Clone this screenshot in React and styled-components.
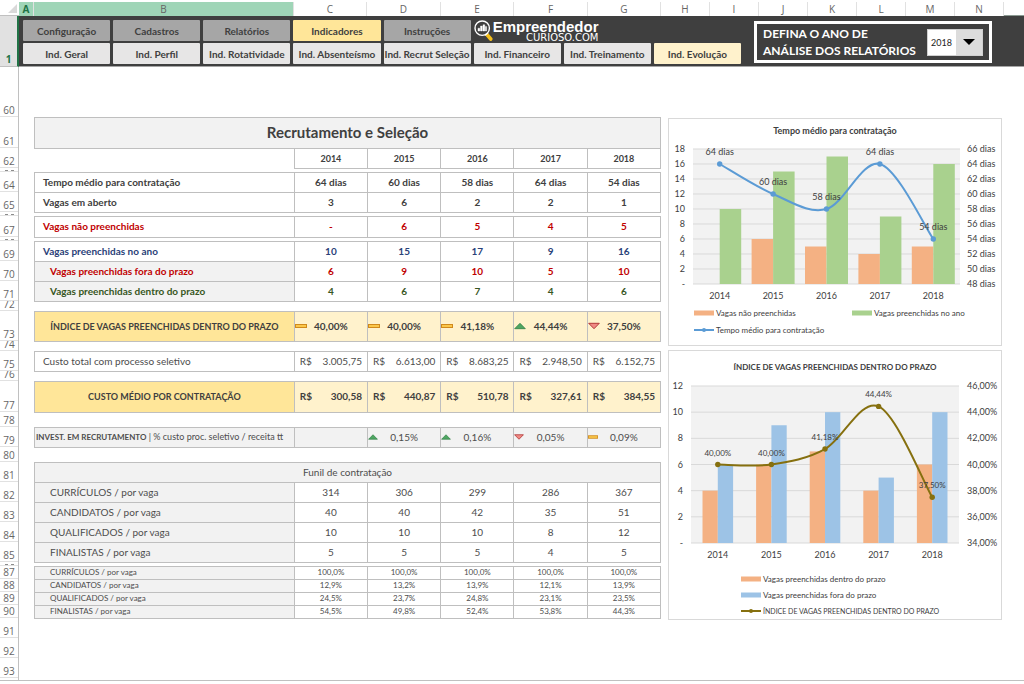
import React, { useState } from 'react';
import styled, { createGlobalStyle } from 'styled-components';

const GlobalStyle = createGlobalStyle`
    * {
        box-sizing: border-box;
    }

    body {
        margin: 0;
        background: #fff;
        color: #404040;
        font-family: Lato, 'Open Sans', sans-serif;
        font-size: 10px;
    }
`;

const SHEET_COLUMNS = '15fr 260fr 73fr 74fr 73fr 74fr 73fr repeat(7, 49fr) 20fr';

const Workbook = styled.div`
    border-bottom: 1px solid #c0c0c0;
`;

const SheetRow = styled.div`
    display: grid;
    grid-template-columns: 19px 1fr;
`;

const ColumnHeads = styled.div`
    display: grid;
    grid-template-columns: ${SHEET_COLUMNS};
    height: 16px;
    padding-top: 2px;
    border-bottom: 1px solid #8c9a92;
`;

const ColumnHead = styled.div`
    border-right: 1px solid #e1e1e1;
    background: ${({ $selected }) => ($selected ? '#9fd5b7' : '#fff')};
    color: ${({ $strong }) => ($strong ? '#217346' : '#666')};
    font-family: 'Open Sans', sans-serif;
    font-size: 10px;
    font-weight: ${({ $strong }) => ($strong ? 700 : 400)};
    line-height: 14px;
    text-align: center;
`;

const Corner = styled.div`
    display: flex;
    align-items: flex-end;
    justify-content: flex-end;
    padding: 2px;
    border-bottom: 1px solid #c0c0c0;
`;

const FrozenNumber = styled.div`
    display: flex;
    align-items: flex-end;
    justify-content: center;
    border-right: 2px solid #217346;
    border-bottom: 1px solid #c0c0c0;
    background: #e1e1e1;
    color: #217346;
    font-family: 'Open Sans', sans-serif;
    font-size: 10px;
    font-weight: 700;
`;

const Toolbar = styled.header`
    display: grid;
    grid-template-columns: 718fr 238fr;
    gap: 13px;
    height: 51px;
    padding: 4px 32px 3px 4px;
    border-bottom: 1px solid #a6a6a6;
    background: #3f3f3f;
`;

const Nav = styled.nav`
    display: grid;
    grid-template-columns: repeat(8, minmax(0, 1fr));
    grid-template-rows: 21px 21px;
    gap: 2px 3px;
`;

const tabColors = {
    main: '#a6a6a6',
    mainActive: '#ffe699',
    sub: '#e7e6e6',
    subActive: '#fff2cc',
};

const Tab = styled.button`
    min-width: 0;
    padding: 0;
    border: 0;
    border-radius: 1px;
    background: ${({ $kind }) => tabColors[$kind]};
    color: #404040;
    font-family: inherit;
    font-size: 10px;
    font-weight: 700;
    white-space: nowrap;
    cursor: pointer;
`;

const Brand = styled.div`
    display: flex;
    grid-column: span 3;
    color: #fff;
`;

const BrandName = styled.div`
    display: flex;
    flex-direction: column;
    align-items: flex-end;
    font-family: 'Liberation Sans', sans-serif;
    font-size: 15px;
    font-weight: 700;
    line-height: 14px;

    small {
        font-family: 'DejaVu Sans', sans-serif;
        font-size: 10px;
        font-weight: 400;
        line-height: 7px;
    }
`;

const YearBox = styled.div`
    display: flex;
    align-items: center;
    justify-content: space-between;
    height: 42px;
    margin-top: 1px;
    padding: 0 6px;
    border: 3px solid #fff;
    color: #fff;
    font-size: 12px;
    font-weight: 700;
    line-height: 17px;
    white-space: nowrap;
`;

const SelectWrap = styled.div`
    position: relative;
    width: 56px;
    height: 27px;
`;

const YearSelect = styled.select`
    width: 100%;
    height: 100%;
    padding: 0 3px;
    border: 1px solid #d0d0d0;
    border-radius: 0;
    appearance: none;
    background: #fff;
    color: #222;
    font-family: inherit;
    font-size: 9px;
`;

const SelectArrow = styled.span`
    position: absolute;
    top: 1px;
    right: 1px;
    bottom: 1px;
    display: flex;
    align-items: center;
    justify-content: center;
    width: 26px;
    background: #dcdcdc;
    pointer-events: none;
`;

const Gutter = styled.div`
    padding-bottom: 2px;
    border-right: 1px solid #c0c0c0;
`;

const RowNumber = styled.div`
    display: flex;
    align-items: flex-end;
    justify-content: center;
    height: ${({ $height }) => $height}px;
    overflow: hidden;
    border-bottom: 1px solid #e1e1e1;
    color: #666;
    font-family: 'Open Sans', sans-serif;
    font-size: 10px;
    line-height: 12px;
`;

// What is left of a number in a row that is almost collapsed
const CollapsedMark = styled.span`
    width: 9px;
    border-bottom: 1px dashed #8c8c8c;
`;

const Sheet = styled.main`
    display: grid;
    grid-template-columns: 627fr 334fr;
    align-items: start;
    gap: 7px;
    padding: 50px 22px 0 15px;
`;

const DataTable = styled.table`
    width: 100%;
    border-collapse: collapse;
    table-layout: fixed;
`;

const LabelCol = styled.col`
    width: 41.5%;
`;

const Title = styled.th`
    padding: 0 0 2px;
    border: 1px solid #bfbfbf;
    background: #f2f2f2;
    font-size: 15px;
    line-height: 20px;
`;

const Row = styled.tr`
    height: ${({ $height }) => $height}px;
`;

const Label = styled.th`
    padding: 0 0 1px ${({ $indent }) => $indent || 0}px;
    border: 1px solid #bfbfbf;
    background: ${({ $bg }) => $bg || '#fff'};
    color: ${({ $color, $bold }) => $color || ($bold ? '#404040' : '#4d4d4d')};
    font-size: ${({ $size }) => $size || 10}px;
    font-weight: ${({ $bold }) => ($bold ? 700 : 400)};
    line-height: 11px;
    text-align: ${({ $center }) => ($center ? 'center' : 'left')};
    white-space: nowrap;

    b {
        font-size: 8px;
    }
`;

const Cell = styled.td`
    padding: 0 0 1px;
    border: 1px solid #bfbfbf;
    background: ${({ $bg }) => $bg || '#fff'};
    color: ${({ $color, $bold }) => $color || ($bold ? '#404040' : '#4d4d4d')};
    font-size: ${({ $size }) => $size || 10}px;
    font-weight: ${({ $bold }) => ($bold ? 700 : 400)};
    line-height: 11px;
    text-align: center;
`;

const YearHead = styled(Cell).attrs({ as: 'th', scope: 'col' })``;

const Blank = styled.td`
    padding: 0;
`;

const Money = styled.div`
    display: flex;
    justify-content: space-between;
    padding: 0 5px;
`;

const Indicator = styled.div`
    display: grid;
    grid-template-columns: 12px 1fr 12px;
    align-items: center;
`;

const Charts = styled.div`
    display: grid;
    gap: 4px;
    padding-top: 1px;
`;

const ChartCard = styled.figure`
    margin: 0;
    border: 1px solid #d9d9d9;

    svg {
        display: block;
        width: 100%;
    }

    text {
        fill: #404040;
        font-size: 9px;
    }

    .title {
        font-weight: 700;
    }

    .small {
        font-size: 8px;
    }

    .tiny {
        font-size: 7px;
    }
`;

const YEARS = ['2014', '2015', '2016', '2017', '2018'];
const RED = '#c00000';
const BLUE = '#2a4178';
const GREEN = '#375623';
const GREY = '#f2f2f2';

const rows = [
    { n: 61, h: 31, title: 'Recrutamento e Seleção' },
    { n: 62, h: 20, years: true },
    { n: 63, h: 4 },
    { n: 64, h: 20, label: 'Tempo médio para contratação', bold: true, indent: 8, values: ['64 dias', '60 dias', '58 dias', '64 dias', '54 dias'] },
    { n: 65, h: 20, label: 'Vagas em aberto', bold: true, indent: 8, values: ['3', '6', '2', '2', '1'] },
    { n: 66, h: 4 },
    { n: 67, h: 21, label: 'Vagas não preenchidas', bold: true, indent: 8, color: RED, values: ['-', '6', '5', '4', '5'] },
    { n: 68, h: 4 },
    { n: 69, h: 20, label: 'Vagas preenchidas no ano', bold: true, indent: 8, color: BLUE, values: ['10', '15', '17', '9', '16'] },
    { n: 70, h: 20, label: 'Vagas preenchidas fora do prazo', bold: true, indent: 15, color: RED, labelBg: GREY, values: ['6', '9', '10', '5', '10'] },
    { n: 71, h: 20, label: 'Vagas preenchidas dentro do prazo', bold: true, indent: 15, color: GREEN, labelBg: GREY, values: ['4', '6', '7', '4', '6'] },
    { n: 72, h: 10 },
    {
        n: 73,
        h: 30,
        label: 'ÍNDICE DE VAGAS PREENCHIDAS DENTRO DO PRAZO',
        bold: true,
        center: true,
        size: 9,
        labelBg: '#ffe699',
        bg: '#fff2cc',
        valueSize: 10,
        values: ['40,00%', '40,00%', '41,18%', '44,44%', '37,50%'],
        icons: ['flat', 'flat', 'flat', 'up', 'down'],
    },
    { n: 74, h: 10 },
    { n: 75, h: 20, label: 'Custo total com processo seletivo', indent: 8, money: true, values: ['3.005,75', '6.613,00', '8.683,25', '2.948,50', '6.152,75'] },
    { n: 76, h: 10 },
    {
        n: 77,
        h: 31,
        label: 'CUSTO MÉDIO POR CONTRATAÇÃO',
        bold: true,
        center: true,
        money: true,
        size: 9,
        labelBg: '#ffe699',
        bg: '#fff2cc',
        valueSize: 10,
        values: ['300,58', '440,87', '510,78', '327,61', '384,55'],
    },
    { n: 78, h: 15 },
    {
        n: 79,
        h: 20,
        label: (
            <>
                <b>INVEST. EM RECRUTAMENTO</b> | % custo proc. seletivo / receita tt
            </>
        ),
        size: 9,
        indent: 1,
        labelBg: GREY,
        bg: GREY,
        valueSize: 10,
        values: ['', '0,15%', '0,16%', '0,05%', '0,09%'],
        icons: [null, 'up', 'up', 'down', 'flat'],
        iconSize: 10,
    },
    { n: 80, h: 15 },
    { n: 81, h: 20, subtitle: 'Funil de contratação' },
    { n: 82, h: 20, label: 'CURRÍCULOS / por vaga', indent: 15, labelBg: GREY, values: ['314', '306', '299', '286', '367'] },
    { n: 83, h: 20, label: 'CANDIDATOS / por vaga', indent: 15, labelBg: GREY, values: ['40', '40', '42', '35', '51'] },
    { n: 84, h: 20, label: 'QUALIFICADOS / por vaga', indent: 15, labelBg: GREY, values: ['10', '10', '10', '8', '12'] },
    { n: 85, h: 20, label: 'FINALISTAS / por vaga', indent: 15, labelBg: GREY, values: ['5', '5', '5', '4', '5'] },
    { n: 86, h: 4 },
    { n: 87, h: 13, label: 'CURRÍCULOS / por vaga', indent: 15, size: 8, labelBg: GREY, values: ['100,0%', '100,0%', '100,0%', '100,0%', '100,0%'] },
    { n: 88, h: 13, label: 'CANDIDATOS / por vaga', indent: 15, size: 8, labelBg: GREY, values: ['12,9%', '13,2%', '13,9%', '12,1%', '13,9%'] },
    { n: 89, h: 13, label: 'QUALIFICADOS / por vaga', indent: 15, size: 8, labelBg: GREY, values: ['24,5%', '23,7%', '24,8%', '23,1%', '23,5%'] },
    { n: 90, h: 13, label: 'FINALISTAS / por vaga', indent: 15, size: 8, labelBg: GREY, values: ['54,5%', '49,8%', '52,4%', '53,8%', '44,3%'] },
];

const gutterRows = [{ n: 60, h: 50 }, ...rows, { n: 91, h: 20 }, { n: 92, h: 20 }, { n: 93, h: 20 }];

const mainTabs = ['Configuração', 'Cadastros', 'Relatórios', 'Indicadores', 'Instruções'];
const subTabs = [
    'Ind. Geral',
    'Ind. Perfil',
    'Ind. Rotatividade',
    'Ind. Absenteísmo',
    'Ind. Recrut Seleção',
    'Ind. Financeiro',
    'Ind. Treinamento',
    'Ind. Evolução',
];

function TrendIcon({ type, size = 12 }) {
    if (!type) return <span />;
    return (
        <svg width={size} height={size} viewBox="0 0 12 12" aria-hidden="true">
            {type === 'up' && <path d="M0.7 8.7 6 3.3 11.3 8.7Z" fill="#4ea662" stroke="#2f7d43" strokeWidth="0.8" />}
            {type === 'down' && <path d="M0.7 3.3H11.3L6 8.7Z" fill="#f08a84" stroke="#b23a3a" strokeWidth="1" />}
            {type === 'flat' && <rect x="0.5" y="4.5" width="11" height="3" fill="#fbc84c" stroke="#d08a1c" />}
        </svg>
    );
}

function LogoIcon() {
    return (
        <svg width="19" height="22" viewBox="0 0 19 22" aria-hidden="true">
            <path d="m12.5 14 4.2 5" stroke="#f6c01c" strokeWidth="3.6" strokeLinecap="round" />
            <path d="m11 15.2 3-2.4" stroke="#fff" strokeWidth="1.4" />
            <circle cx="8.2" cy="8.2" r="7.2" fill="#3f3f3f" stroke="#fff" strokeWidth="1.4" />
            <path d="M4 11V8.2h1.8V11zm2.5 0V6h1.8v5zm2.5 0V4.8h1.8V11zm2.4 0V6.6h1.2V11z" fill="#fff" stroke="#fff" strokeWidth="0.4" />
        </svg>
    );
}

function TableRow({ row }) {
    if (row.title) {
        return (
            <Row $height={row.h}>
                <Title colSpan={6}>{row.title}</Title>
            </Row>
        );
    }
    if (row.years) {
        return (
            <Row $height={row.h}>
                <Blank />
                {YEARS.map((year) => (
                    <YearHead $bold $size={9} key={year}>
                        {year}
                    </YearHead>
                ))}
            </Row>
        );
    }
    if (row.subtitle) {
        return (
            <Row $height={row.h}>
                <Label colSpan={6} $center $bg={GREY}>
                    {row.subtitle}
                </Label>
            </Row>
        );
    }
    if (!row.values) {
        return (
            <Row $height={row.h} aria-hidden="true">
                <Blank colSpan={6} />
            </Row>
        );
    }
    return (
        <Row $height={row.h}>
            <Label scope="row" $indent={row.indent} $bg={row.labelBg} $color={row.color} $size={row.size} $bold={row.bold} $center={row.center}>
                {row.label}
            </Label>
            {row.values.map((value, i) => (
                <Cell key={YEARS[i]} $bg={row.bg} $color={row.color} $size={row.valueSize || row.size} $bold={row.bold}>
                    {row.money && (
                        <Money>
                            <span>R$</span>
                            <span>{value}</span>
                        </Money>
                    )}
                    {row.icons && (
                        <Indicator>
                            <TrendIcon type={row.icons[i]} size={row.iconSize} />
                            <span>{value}</span>
                        </Indicator>
                    )}
                    {!row.money && !row.icons && value}
                </Cell>
            ))}
        </Row>
    );
}

// Smooth line through the points, each segment as a cubic curve
function smoothPath(points) {
    return points.reduce((path, [x, y], i) => {
        if (i === 0) return `M${x} ${y}`;
        const prev = points[i - 1];
        const before = points[i - 2] || prev;
        const next = points[i + 1] || [x, y];
        const c1 = [prev[0] + (x - before[0]) / 6, prev[1] + (y - before[1]) / 6];
        const c2 = [x - (next[0] - prev[0]) / 6, y - (next[1] - prev[1]) / 6];
        return `${path} C${c1} ${c2} ${x} ${y}`;
    }, '');
}

function ComboChart({ title, titleClass, height, plot, max, bars, barWidth, line, legend }) {
    const band = plot.width / YEARS.length;
    const bottom = plot.top + plot.height;
    const steps = max / 2;
    const center = (i) => plot.left + band * (i + 0.5);
    const points = line.values.map((v, i) => [center(i), plot.top + ((line.max - v) / (line.max - line.min)) * plot.height]);

    return (
        <ChartCard>
            <svg viewBox={`0 0 332 ${height}`} role="img" aria-label={title}>
                <text className={`title ${titleClass || ''}`} x="166" y={plot.titleY} textAnchor="middle">
                    {title}
                </text>
                <rect x={plot.left} y={plot.top} width={plot.width} height={plot.height} fill="#f2f2f2" />
                {Array.from({ length: steps + 1 }, (_, i) => {
                    const y = plot.top + (plot.height / steps) * i;
                    return (
                        <g key={i}>
                            <path d={`M${plot.left} ${y}h${plot.width}`} stroke="#d9d9d9" />
                            <text x={plot.labelX} y={y + 3} textAnchor="end">
                                {i === steps ? '-' : max - i * 2}
                            </text>
                            <text x="298" y={y + 3}>
                                {line.format(line.max - ((line.max - line.min) / steps) * i)}
                            </text>
                        </g>
                    );
                })}
                {bars.map((series, s) =>
                    series.values.map((v, i) => {
                        const h = (v / max) * plot.height;
                        return (
                            <rect key={`${s}-${i}`} x={center(i) + (s - 1) * barWidth} y={bottom - h} width={barWidth} height={h} fill={series.color} />
                        );
                    })
                )}
                <path d={smoothPath(points)} fill="none" stroke={line.color} strokeWidth="2" />
                {points.map(([x, y], i) => (
                    <g key={YEARS[i]}>
                        <circle cx={x} cy={y} r="2.7" fill={line.color} />
                        <text className={line.labelClass} x={x} y={y - 9} textAnchor="middle">
                            {line.format(line.values[i])}
                        </text>
                        <text x={x} y={bottom + 15} textAnchor="middle">
                            {YEARS[i]}
                        </text>
                    </g>
                ))}
                {legend.map(({ x, y, color, text, isLine, size }) => (
                    <g key={text}>
                        <rect x={x} y={isLine ? y - 1 : y - 2.5} width="20" height={isLine ? 2 : 5} fill={color} />
                        {isLine && <circle cx={x + 10} cy={y} r="2" fill={color} />}
                        <text className={size || 'small'} x={x + 22} y={y + 3}>
                            {text}
                        </text>
                    </g>
                ))}
            </svg>
        </ChartCard>
    );
}

export default function App() {
    const [year, setYear] = useState('2018');

    return (
        <>
            <GlobalStyle />
            <Workbook>
                <SheetRow>
                    <Corner>
                        <svg width="9" height="9" viewBox="0 0 9 9" aria-hidden="true">
                            <path d="M9 0V9H0Z" fill="#d9d9d9" />
                        </svg>
                    </Corner>
                    <ColumnHeads>
                        {'ABCDEFGHIJKLMN'.split('').map((letter) => (
                            <ColumnHead key={letter} $selected={letter === 'A' || letter === 'B'} $strong={letter === 'A'}>
                                {letter}
                            </ColumnHead>
                        ))}
                    </ColumnHeads>
                </SheetRow>
                <SheetRow>
                    <FrozenNumber>1</FrozenNumber>
                    <Toolbar>
                        <Nav>
                            {mainTabs.map((tab) => (
                                <Tab key={tab} type="button" $kind={tab === 'Indicadores' ? 'mainActive' : 'main'}>
                                    {tab}
                                </Tab>
                            ))}
                            <Brand>
                                <LogoIcon />
                                <BrandName>
                                    Empreendedor
                                    <small>CURIOSO.COM</small>
                                </BrandName>
                            </Brand>
                            {subTabs.map((tab) => (
                                <Tab key={tab} type="button" $kind={tab === 'Ind. Evolução' ? 'subActive' : 'sub'}>
                                    {tab}
                                </Tab>
                            ))}
                        </Nav>
                        <YearBox>
                            <label htmlFor="year">
                                DEFINA O ANO DE
                                <br />
                                ANÁLISE DOS RELATÓRIOS
                            </label>
                            <SelectWrap>
                                <YearSelect id="year" value={year} onChange={(e) => setYear(e.target.value)}>
                                    {YEARS.map((y) => (
                                        <option key={y}>{y}</option>
                                    ))}
                                </YearSelect>
                                <SelectArrow>
                                    <svg width="12" height="6" viewBox="0 0 12 6" aria-hidden="true">
                                        <path d="M0 0H12L6 6Z" fill="#000" />
                                    </svg>
                                </SelectArrow>
                            </SelectWrap>
                        </YearBox>
                    </Toolbar>
                </SheetRow>
                <SheetRow>
                    <Gutter>
                        {gutterRows.map((row) => (
                            <RowNumber key={row.n} $height={row.h}>
                                {row.h < 5 ? <CollapsedMark /> : row.n}
                            </RowNumber>
                        ))}
                    </Gutter>
                    <Sheet>
                        <DataTable>
                            <colgroup>
                                <LabelCol />
                                <col span="5" />
                            </colgroup>
                            <tbody>
                                {rows.map((row) => (
                                    <TableRow key={row.n} row={row} />
                                ))}
                            </tbody>
                        </DataTable>
                        <Charts>
                            <ComboChart
                                title="Tempo médio para contratação"
                                height={226}
                                plot={{ left: 24, top: 30, width: 267, height: 135, titleY: 15, labelX: 16 }}
                                max={18}
                                barWidth={21.5}
                                bars={[
                                    { color: '#f4b183', values: [0, 6, 5, 4, 5] },
                                    { color: '#a9d18e', values: [10, 15, 17, 9, 16] },
                                ]}
                                line={{ color: '#5b9bd5', min: 48, max: 66, values: [64, 60, 58, 64, 54], format: (v) => `${v} dias` }}
                                legend={[
                                    { x: 25, y: 194, color: '#f4b183', text: 'Vagas não preenchidas' },
                                    { x: 183, y: 194, color: '#a9d18e', text: 'Vagas preenchidas no ano' },
                                    { x: 25, y: 211, color: '#5b9bd5', text: 'Tempo médio para contratação', isLine: true },
                                ]}
                            />
                            <ComboChart
                                title="ÍNDICE DE VAGAS PREENCHIDAS DENTRO DO PRAZO"
                                titleClass="small"
                                height={268}
                                plot={{ left: 22, top: 35, width: 268, height: 157, titleY: 19, labelX: 14 }}
                                max={12}
                                barWidth={15.3}
                                bars={[
                                    { color: '#f4b183', values: [4, 6, 7, 4, 6] },
                                    { color: '#9dc3e6', values: [6, 9, 10, 5, 10] },
                                ]}
                                line={{
                                    color: '#86700f',
                                    min: 34,
                                    max: 46,
                                    values: [40, 40, 41.18, 44.44, 37.5],
                                    format: (v) => `${v.toFixed(2).replace('.', ',')}%`,
                                    labelClass: 'small',
                                }}
                                legend={[
                                    { x: 72, y: 228, color: '#f4b183', text: 'Vagas preenchidas dentro do prazo' },
                                    { x: 72, y: 244, color: '#9dc3e6', text: 'Vagas preenchidas fora do prazo' },
                                    { x: 72, y: 260, color: '#86700f', text: 'ÍNDICE DE VAGAS PREENCHIDAS DENTRO DO PRAZO', isLine: true, size: 'tiny' },
                                ]}
                            />
                        </Charts>
                    </Sheet>
                </SheetRow>
            </Workbook>
        </>
    );
}
